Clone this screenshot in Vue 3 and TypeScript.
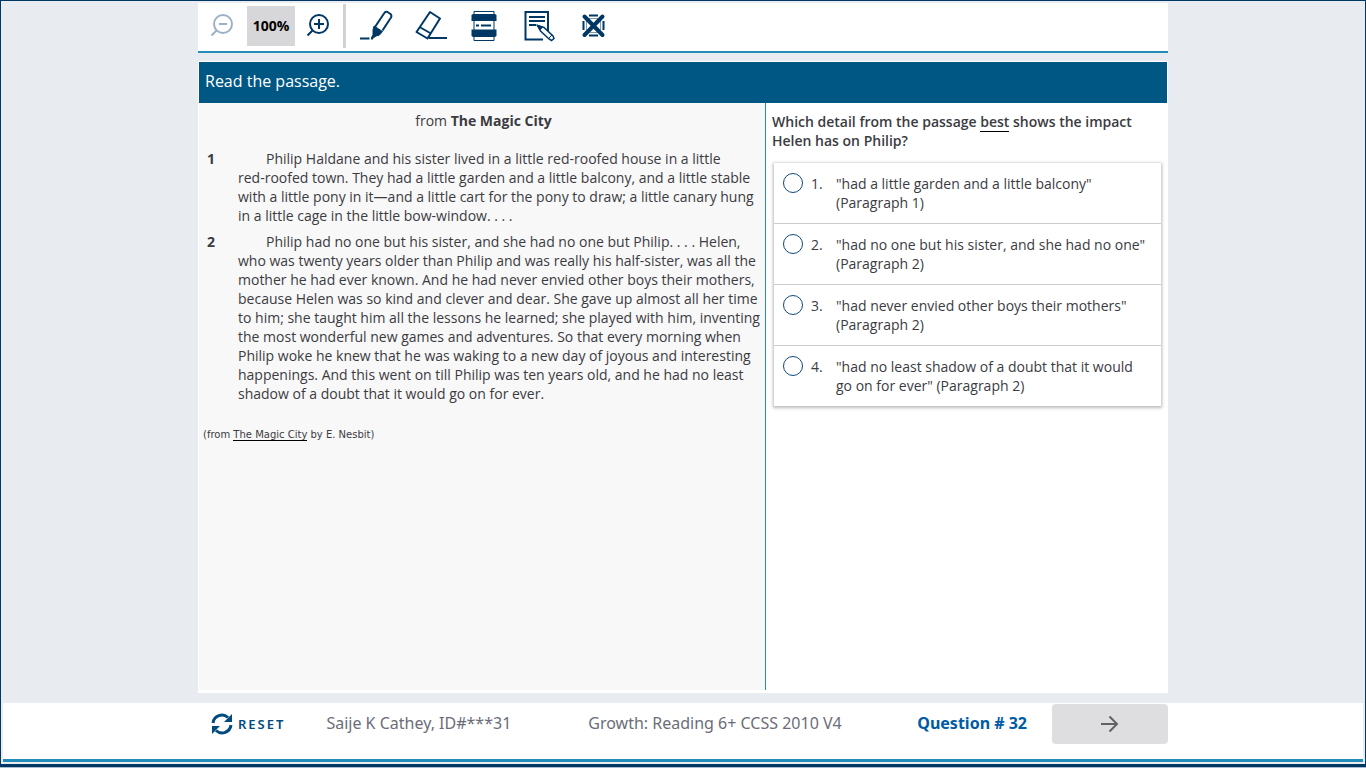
<script setup lang="ts">
import { ref } from 'vue'

interface Paragraph { n: number; text: string }
interface Choice { n: number; text: string; source: string }

// Word joiners keep "red-roofed" on one line.
const paragraphs: Paragraph[] = [
  { n: 1, text: 'Philip Haldane and his sister lived in a little red-roofed house in a little red-\u2060roofed town. They had a little garden and a little balcony, and a little stable with a little pony in it—and a little cart for the pony to draw; a little canary hung in a little cage in the little bow-window. . . .' },
  { n: 2, text: 'Philip had no one but his sister, and she had no one but Philip. . . . Helen, who was twenty years older than Philip and was really his half-sister, was all the mother he had ever known. And he had never envied other boys their mothers, because Helen was so kind and clever and dear. She gave up almost all her time to him; she taught him all the lessons he learned; she played with him, inventing the most wonderful new games and adventures. So that every morning when Philip woke he knew that he was waking to a new day of joyous and interesting happenings. And this went on till Philip was ten years old, and he had no least shadow of a doubt that it would go on for ever.' },
]
const choices: Choice[] = [
  { n: 1, text: '"had a little garden and a little balcony"', source: '(Paragraph 1)' },
  { n: 2, text: '"had no one but his sister, and she had no one"', source: '(Paragraph 2)' },
  { n: 3, text: '"had never envied other boys their mothers"', source: '(Paragraph 2)' },
  { n: 4, text: '"had no least shadow of a doubt that it would go on for ever"', source: '(Paragraph 2)' },
]
const answer = ref<number | null>(null)
const zoom = ref(100)
</script>

<template>
  <div class="screen">
    <header class="toolbar">
      <button class="tool zoom-out" aria-label="Zoom out" :disabled="zoom <= 100" @click="zoom -= 10">
        <svg width="24" height="26" viewBox="0 0 24 26" fill="none" stroke="currentColor"><circle cx="13" cy="11" r="9" stroke-width="2" /><path d="M6.500 17.500L1.500 22.500M9 11H17" stroke-width="2" /></svg>
      </button>
      <output class="level">{{ zoom }}%</output>
      <button class="tool zoom-in" aria-label="Zoom in" @click="zoom += 10">
        <svg width="24" height="26" viewBox="0 0 24 26" fill="none" stroke="currentColor"><circle cx="12" cy="11" r="9" stroke-width="2" /><path d="M5.500 17.500L0.500 22.500M7 11H17M12 6V16" stroke-width="2" /></svg>
      </button>
      <span class="divider"></span>
      <div class="tools">
        <button class="tool" aria-label="Highlighter">
          <svg width="34" height="32" viewBox="0 0 34 32" fill="none" stroke="currentColor" stroke-width="2" stroke-linejoin="round"><path d="M16 17L25 3.500Q26.500 1 28.500 2L31.500 4Q33 5.500 32 7.500L23.500 20.500" /><path d="M15 16L23.500 21.500L20.500 25L17 26L13.500 28.500L12.500 27.500L14 25V20Z" fill="currentColor" stroke-width="1" /><path d="M1 28.500H10.500M12 28.500H14" /></svg>
        </button>
        <button class="tool" aria-label="Eraser">
          <svg width="34" height="32" viewBox="0 0 34 32" fill="none" stroke="currentColor" stroke-width="2" stroke-linejoin="round"><path d="M17 2L27 8.500L14.500 28.500L3.500 22ZM6.500 17L18 23.500" /><path d="M16 28H34" /></svg>
        </button>
        <button class="tool" aria-label="Line reader">
          <svg width="34" height="32" viewBox="0 0 34 32" fill="currentColor"><path d="M7 1.500H27V30.500H7Z" fill="none" stroke="currentColor" stroke-width="1" /><path d="M6 4H28L29.500 5V11H4.500V5ZM4.500 19.500H29.500V26L28 27H6L4.500 26ZM9 14.500H12V16.500H9ZM14 14.500H24V16.500H14Z" /></svg>
        </button>
        <button class="tool" aria-label="Notepad">
          <svg width="34" height="32" viewBox="0 0 34 32" fill="none" stroke="currentColor" stroke-width="2"><path d="M22 29.500H4.500V2H27V21M8 7H24M8 11H24M8 15H15" /><path d="M16.500 15.500L19.500 21L28 29L30.500 30.500L33 28.500L32 26L23 17.500Z" fill="#fff" stroke-width="1.500" /><path d="M16 15L21.500 17L19 20Z" fill="currentColor" stroke-width="1" /><path d="M28 28L31 25" stroke-width="1" /></svg>
        </button>
        <button class="tool" aria-label="Answer eliminator">
          <svg width="34" height="32" viewBox="0 0 34 32" fill="none" stroke="currentColor"><path d="M14 5.500H23M14 25.500H23M8.500 11V20M28.500 11V20" stroke-width="2" /><path d="M14 8.500H23M14 22.500H23M11.500 11V20M25.500 11V20" stroke-width="1" stroke-opacity="0.500" /><path d="M9.500 6.500L27.500 25M27.500 6.500L9.500 25" stroke-width="4" stroke-linecap="round" /></svg>
        </button>
      </div>
    </header>

    <main class="item">
      <h1 class="directions">Read the passage.</h1>
      <div class="panes">
        <article class="passage">
          <h2 class="title">from <b>The Magic City</b></h2>
          <div v-for="p in paragraphs" :key="p.n" class="para">
            <b>{{ p.n }}</b>
            <p>{{ p.text }}</p>
          </div>
          <p class="credit">(from <span class="underlined">The Magic City</span> by E. Nesbit)</p>
        </article>
        <section class="question">
          <h2 class="prompt">Which detail from the passage <span class="underlined">best</span> shows the impact Helen has on Philip?</h2>
          <div class="choices" role="radiogroup" aria-label="Answer choices">
            <label v-for="c in choices" :key="c.n" class="choice">
              <input v-model="answer" type="radio" name="answer" :value="c.n">
              <span class="number">{{ c.n }}.</span>
              <span class="text">{{ c.text }} {{ c.source }}</span>
            </label>
          </div>
        </section>
      </div>
    </main>

    <footer class="bottom">
      <div class="bar">
        <button class="reset" @click="answer = null">
          <svg width="22" height="22" viewBox="0 0 22 22"><path d="M2 10A9 9 0 0 1 17 4.500M20 12A9 9 0 0 1 5 17.500" fill="none" stroke="currentColor" stroke-width="3" /><path d="M21 1V9H13ZM1 21V13H9Z" fill="currentColor" /></svg>
          RESET
        </button>
        <span class="student">Saije K Cathey, ID#***31</span>
        <span class="test">Growth: Reading 6+ CCSS 2010 V4</span>
        <b class="count">Question # 32</b>
        <button class="next" aria-label="Next question">
          <svg width="20" height="18" viewBox="0 0 20 18" fill="none" stroke="currentColor" stroke-width="2"><path d="M1 9H17M9.500 1.500L17 9L9.500 16.500" /></svg>
        </button>
      </div>
    </footer>
  </div>
</template>

<style>
body {
  margin: 0;
  background: #a9bdd0;
}
</style>

<style scoped>
.screen {
  box-sizing: border-box;
  height: calc(100vh - 1px);
  display: flex;
  flex-direction: column;
  border: 1px solid #003865;
  border-bottom-width: 3px;
  padding: 2px;
  background: #e8ebf0;
  color: #3b3b42;
  font: 14px/19px "Open Sans", "Noto Sans", sans-serif;
}
button {
  border: 0;
  padding: 0;
  background: none;
  font: inherit;
  cursor: pointer;
}
svg {
  display: block;
}
.toolbar,
.item,
.bar {
  box-sizing: border-box;
  width: 100%;
  max-width: 970px;
  margin: 0 auto;
}
.toolbar {
  height: 50px;
  flex-shrink: 0;
  display: flex;
  align-items: center;
  padding-bottom: 2px;
  background: #fff;
  border-bottom: 2px solid #218db8;
}
.tool {
  color: #003865;
}
.zoom-out {
  margin-left: 12px;
}
.zoom-out:disabled {
  color: #9db2c7;
}
.level {
  width: 48px;
  margin: 0 12px 0 13px;
  background: #d7d7d9;
  color: #000;
  font-weight: 700;
  line-height: 40px;
  text-align: center;
}
.divider {
  width: 3px;
  height: 44px;
  margin: 0 13px 0 12px;
  background: #d2d2d4;
}
.tools {
  display: flex;
  gap: 20px;
}
.item {
  flex: 1;
  min-height: 0;
  display: flex;
  flex-direction: column;
  margin: 8px auto 10px;
  border: 1px solid #fff;
  border-bottom-width: 3px;
  background: #fff;
}
.directions {
  margin: 0;
  padding: 0 6px 2px;
  background: #005783;
  color: #fff;
  font-size: 16px;
  font-weight: 400;
  line-height: 39px;
}
.panes {
  flex: 1;
  min-height: 0;
  display: grid;
  grid-template-columns: 567px 1fr;
}
.passage {
  padding: 8px 4px;
  background: #f8f8f8;
  border-right: 1px solid #218db8;
}
.title {
  margin: 0 0 19px;
  padding-left: 3px;
  font-size: 14px;
  font-weight: 400;
  text-align: center;
}
.para {
  display: flex;
  margin-bottom: 7px;
}
.para b {
  flex: 0 0 31px;
  padding-left: 4px;
}
.para p {
  margin: 0;
  text-indent: 28px;
}
.credit {
  margin: 22px 0 0;
  font: 10px/20px "DejaVu Sans", sans-serif;
}
.underlined {
  border-bottom: 1px solid #000;
}
.question {
  padding: 9px 6px 0;
}
.prompt {
  margin: 0 0 13px;
  font-size: 14px;
  font-weight: 600;
}
.choices {
  margin-left: 2px;
  box-shadow: 0 1px 3px 1px #bbb;
}
.choice {
  display: flex;
  padding: 11px 12px 11px 9px;
  background: #fff;
}
.choice + .choice {
  border-top: 1px solid #ccc;
}
.choice input {
  appearance: none;
  box-sizing: border-box;
  flex: 0 0 20px;
  height: 20px;
  margin: -1px 0 0;
  border: 1px solid #10487c;
  border-radius: 50%;
}
.choice input:checked {
  background: #10487c;
  box-shadow: inset 0 0 0 4px #fff;
}
.number {
  flex: 0 0 25px;
  margin-left: 8px;
}
.bottom {
  background: #fff;
  border-bottom: 3px solid #218db8;
}
.bar {
  height: 56px;
  display: flex;
  align-items: flex-start;
  padding-top: 1px;
  color: #6c6d78;
  font: 16px/38px "Noto Sans", "Open Sans", sans-serif;
}
.reset {
  display: flex;
  align-items: center;
  gap: 5px;
  height: 40px;
  margin-left: 13px;
  color: #004a80;
  font-size: 13px;
  font-weight: 600;
  letter-spacing: 2px;
}
.student {
  margin-left: 41px;
}
.test {
  margin-left: 77px;
}
.count {
  margin-left: auto;
  color: #005ba5;
}
.next {
  width: 116px;
  height: 40px;
  margin-left: 25px;
  display: grid;
  place-items: center;
  border-radius: 4px;
  background: #dedee0;
  color: #626262;
}
</style>
